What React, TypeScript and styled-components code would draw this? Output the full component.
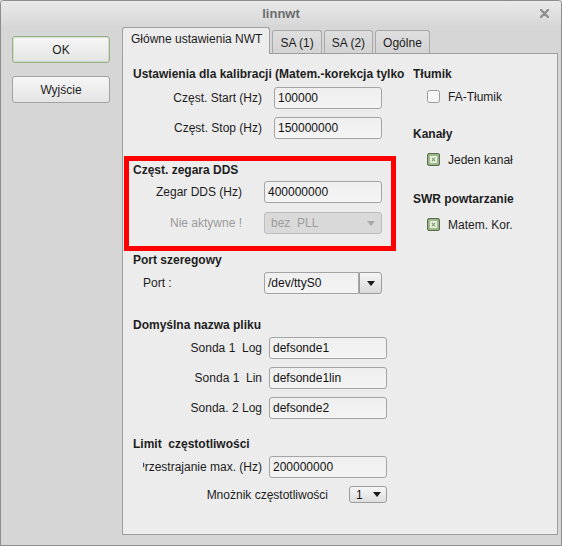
import styled, { createGlobalStyle } from 'styled-components';

const GlobalStyle = createGlobalStyle`
  html, body {
    margin: 0;
    padding: 0;
    background: #d6d6d6;
  }
  body {
    font-family: "Liberation Sans", Arial, sans-serif;
    font-size: 12px;
    color: #1c1c1c;
  }
`;

// okno dialogu
const Window = styled.div`
  width: 562px;
  height: 546px;
  box-sizing: border-box;
  border: 1px solid #8c8c8c;
  border-radius: 4px 4px 0 0;
  background: #d6d6d6;
  display: flex;
  flex-direction: column;
  overflow: hidden;
`;

// pasek tytułu
const TitleBar = styled.div`
  height: 24px;
  flex-shrink: 0;
  display: grid;
  grid-template-columns: 1fr auto 1fr;
  align-items: center;
  background: linear-gradient(#e9e9e9, #d8d8d8);
`;

const TitleText = styled.div`
  grid-column: 2;
  font-size: 13px;
  font-weight: bold;
  color: #6d6d6d;
`;

const CloseButton = styled.div`
  grid-column: 3;
  justify-self: end;
  margin-right: 12px;
  display: flex;
`;

const Body = styled.div`
  flex: 1;
  display: flex;
  gap: 12px;
  padding: 2px 3px 10px 11px;
`;

// lewa kolumna z przyciskami
const ButtonColumn = styled.div`
  display: flex;
  flex-direction: column;
  gap: 13px;
  padding-top: 9px;
`;

const PushButton = styled.div<{ $default?: boolean }>`
  width: 98px;
  height: 27px;
  box-sizing: border-box;
  border: 1px solid ${(p) => (p.$default ? '#9ab089' : '#a2a2a2')};
  border-radius: 3px;
  background: linear-gradient(#f6f6f6, #e4e4e4);
  box-shadow: ${(p) => (p.$default ? 'inset 0 0 0 1px rgba(170, 200, 150, 0.45)' : 'none')};
  display: flex;
  align-items: center;
  justify-content: center;
  font-size: 12px;
  color: #1c1c1c;
`;

// zakładki
const TabWidget = styled.div`
  width: 436px;
  display: flex;
  flex-direction: column;
`;

const TabBar = styled.div`
  height: 26px;
  display: flex;
  align-items: flex-end;
  gap: 2px;
`;

const Tab = styled.div<{ $active?: boolean }>`
  height: ${(p) => (p.$active ? 27 : 23)}px;
  margin-bottom: ${(p) => (p.$active ? -1 : 0)}px;
  box-sizing: border-box;
  padding: ${(p) => (p.$active ? '3px 7px 0 8px' : '4px 7px 0 7px')};
  line-height: 16px;
  border: 1px solid ${(p) => (p.$active ? '#a0a0a0' : '#a8a8a8')};
  border-bottom: none;
  border-radius: 3px 3px 0 0;
  background: ${(p) => (p.$active ? '#ececec' : 'linear-gradient(#dedede, #d3d3d3)')};
  position: relative;
  z-index: ${(p) => (p.$active ? 1 : 0)};
  white-space: nowrap;
`;

const Panel = styled.div`
  flex: 1;
  border: 1px solid #9e9e9e;
  background: #ececec;
  display: flex;
`;

const LeftColumn = styled.div`
  width: 290px;
  padding-top: 12px;
  display: flex;
  flex-direction: column;
`;

const RightColumn = styled.div`
  flex: 1;
  padding-top: 12px;
  display: flex;
  flex-direction: column;
`;

const Section = styled.div<{ $top: number }>`
  margin-top: ${(p) => p.$top}px;
  padding-left: 10px;
  display: flex;
  flex-direction: column;
`;

// czerwona ramka wokół grupy DDS
const HighlightGroup = styled.div`
  margin: 17px 0 0 1px;
  width: 272px;
  box-sizing: border-box;
  border: 5px solid #ff0000;
  padding: 1px 0 12px 4px;
  display: flex;
  flex-direction: column;
`;

const Heading = styled.div<{ $top?: number }>`
  margin-top: ${(p) => p.$top ?? 0}px;
  font-weight: bold;
  line-height: 16px;
  white-space: pre;
  overflow: hidden;
  color: #1e1e1e;
`;

const Row = styled.div<{ $top: number; $gap: number; $height?: number }>`
  margin-top: ${(p) => p.$top}px;
  height: ${(p) => p.$height ?? 22}px;
  display: flex;
  align-items: center;
  gap: ${(p) => p.$gap}px;
`;

// etykieta: tekst przycinany z lewej strony, gdy się nie mieści
const Label = styled.div<{ $width: number; $align?: 'left' | 'right'; $indent?: number; $muted?: boolean }>`
  width: ${(p) => p.$width}px;
  margin-left: ${(p) => p.$indent ?? 0}px;
  display: flex;
  justify-content: ${(p) => (p.$align === 'left' ? 'flex-start' : 'flex-end')};
  overflow: hidden;
  white-space: pre;
  color: ${(p) => (p.$muted ? '#9a9a9a' : '#1c1c1c')};
  span {
    flex-shrink: 0;
  }
`;

const Field = styled.div<{ $width: number; $joined?: boolean }>`
  width: ${(p) => p.$width}px;
  height: 22px;
  box-sizing: border-box;
  border: 1px solid #a4a4a4;
  border-radius: ${(p) => (p.$joined ? '3px 0 0 3px' : '3px')};
  background: linear-gradient(#efefef, #f4f4f4);
  padding-left: 3px;
  line-height: 20px;
  color: #111;
`;

const Combo = styled.div`
  display: flex;
`;

const ComboButton = styled.div`
  width: 23px;
  height: 22px;
  box-sizing: border-box;
  border: 1px solid #9c9c9c;
  border-radius: 0 3px 3px 0;
  background: linear-gradient(#f5f5f5, #dadada);
  display: flex;
  align-items: center;
  justify-content: center;
`;

const Arrow = styled.span<{ $color: string }>`
  width: 0;
  height: 0;
  border-left: 4px solid transparent;
  border-right: 4px solid transparent;
  border-top: 5px solid ${(p) => p.$color};
`;

const DisabledCombo = styled.div`
  width: 118px;
  height: 22px;
  box-sizing: border-box;
  border: 1px solid #bdbdbd;
  border-radius: 3px;
  background: #d9d9d9;
  padding: 0 6px;
  display: flex;
  align-items: center;
  justify-content: space-between;
  color: #9d9d9d;
  white-space: pre;
`;

const SmallCombo = styled.div`
  width: 38px;
  height: 17px;
  box-sizing: border-box;
  border: 1px solid #9c9c9c;
  border-radius: 3px;
  background: linear-gradient(#f6f6f6, #dedede);
  padding: 0 5px 0 6px;
  display: flex;
  align-items: center;
  justify-content: space-between;
  color: #111;
`;

const CheckRow = styled.div<{ $top: number }>`
  margin-top: ${(p) => p.$top}px;
  height: 17px;
  padding-left: 14px;
  display: flex;
  align-items: center;
  gap: 8px;
`;

function CheckBox({ checked }: { checked?: boolean }) {
  if (!checked) {
    return (
      <svg width="13" height="13" viewBox="0 0 13 13">
        <rect x="0.5" y="0.5" width="12" height="12" rx="2" fill="#f6f6f6" stroke="#9a9a9a" />
      </svg>
    );
  }
  return (
    <svg width="13" height="13" viewBox="0 0 13 13">
      <rect x="0.5" y="0.5" width="12" height="12" rx="1.5" fill="#93b47b" stroke="#5e6a55" />
      <rect x="3" y="3" width="7" height="7" fill="#f4f6f2" stroke="#c9d6bf" strokeWidth="0.6" />
      <path d="M4.8 4.8 L8.2 8.2 M8.2 4.8 L4.8 8.2" stroke="#8dac76" strokeWidth="1.4" />
    </svg>
  );
}

export default function App() {
  return (
    <>
      <GlobalStyle />
      <Window>
        <TitleBar>
          <TitleText>linnwt</TitleText>
          <CloseButton>
            <svg width="9" height="9" viewBox="0 0 9 9">
              <path d="M1 1 L8 8 M8 1 L1 8" stroke="#8e8e8e" strokeWidth="2.4" strokeLinecap="round" />
            </svg>
          </CloseButton>
        </TitleBar>
        <Body>
          <ButtonColumn>
            <PushButton $default>OK</PushButton>
            <PushButton>Wyjście</PushButton>
          </ButtonColumn>
          <TabWidget>
            <TabBar>
              <Tab $active>Główne ustawienia NWT</Tab>
              <Tab>SA (1)</Tab>
              <Tab>SA (2)</Tab>
              <Tab>Ogólne</Tab>
            </TabBar>
            <Panel>
              <LeftColumn>
                <Section $top={0}>
                  <Heading>Ustawienia dla kalibracji (Matem.-korekcja tylko</Heading>
                  <Row $top={5} $gap={12}>
                    <Label $width={129}><span>Częst. Start (Hz)</span></Label>
                    <Field $width={108}>100000</Field>
                  </Row>
                  <Row $top={8} $gap={12}>
                    <Label $width={129}><span>Częst. Stop (Hz)</span></Label>
                    <Field $width={108}>150000000</Field>
                  </Row>
                </Section>

                <HighlightGroup>
                  <Heading>Częst. zegara DDS</Heading>
                  <Row $top={3} $gap={22}>
                    <Label $width={109}><span>Zegar DDS (Hz)</span></Label>
                    <Field $width={118}>400000000</Field>
                  </Row>
                  <Row $top={9} $gap={22}>
                    <Label $width={109} $muted><span>Nie aktywne !</span></Label>
                    <DisabledCombo>
                      <span>bez  PLL</span>
                      <Arrow $color="#a9a9a9" />
                    </DisabledCombo>
                  </Row>
                </HighlightGroup>

                <Section $top={1}>
                  <Heading>Port szeregowy</Heading>
                  <Row $top={4} $gap={0}>
                    <Label $width={121} $align="left" $indent={10}><span>Port :</span></Label>
                    <Combo>
                      <Field $width={95} $joined>/dev/ttyS0</Field>
                      <ComboButton>
                        <Arrow $color="#1a1a1a" />
                      </ComboButton>
                    </Combo>
                  </Row>
                </Section>

                <Section $top={23}>
                  <Heading>Domyślna nazwa pliku</Heading>
                  <Row $top={4} $gap={7}>
                    <Label $width={129}><span>Sonda 1  Log</span></Label>
                    <Field $width={118}>defsonde1</Field>
                  </Row>
                  <Row $top={8} $gap={7}>
                    <Label $width={129}><span>Sonda 1  Lin</span></Label>
                    <Field $width={118}>defsonde1lin</Field>
                  </Row>
                  <Row $top={8} $gap={7}>
                    <Label $width={129}><span>Sonda. 2 Log</span></Label>
                    <Field $width={118}>defsonde2</Field>
                  </Row>
                </Section>

                <Section $top={17}>
                  <Heading>Limit  częstotliwości</Heading>
                  <Row $top={4} $gap={7}>
                    <Label $width={119} $indent={10}><span>Przestrajanie max. (Hz)</span></Label>
                    <Field $width={118}>200000000</Field>
                  </Row>
                  <Row $top={8} $gap={21} $height={17}>
                    <Label $width={195}><span>Mnożnik częstotliwości</span></Label>
                    <SmallCombo>
                      <span>1</span>
                      <Arrow $color="#1a1a1a" />
                    </SmallCombo>
                  </Row>
                </Section>
              </LeftColumn>

              <RightColumn>
                <Heading>Tłumik</Heading>
                <CheckRow $top={6}>
                  <CheckBox />
                  <span>FA-Tłumik</span>
                </CheckRow>
                <Heading $top={21}>Kanały</Heading>
                <CheckRow $top={9}>
                  <CheckBox checked />
                  <span>Jeden kanał</span>
                </CheckRow>
                <Heading $top={23}>SWR powtarzanie</Heading>
                <CheckRow $top={9}>
                  <CheckBox checked />
                  <span>Matem. Kor.</span>
                </CheckRow>
              </RightColumn>
            </Panel>
          </TabWidget>
        </Body>
      </Window>
    </>
  );
}
